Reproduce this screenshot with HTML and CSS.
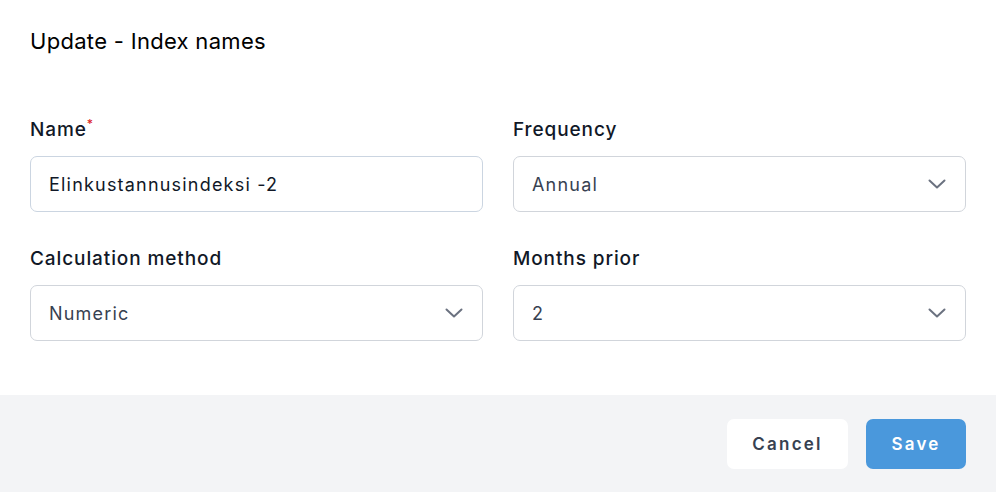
FILE: index.html
```html
<!DOCTYPE html>
<html>
<head>
<meta charset="utf-8">
<link rel="stylesheet" href="styles.css">
</head>
<body>
<div class="modal">
  <div class="content">
    <h1 class="title">Update - Index names</h1>
    <div class="grid">
      <div class="field">
        <label class="label">Name<span class="req">*</span></label>
        <div class="control input-control">Elinkustannusindeksi -2</div>
      </div>
      <div class="field">
        <label class="label">Frequency</label>
        <div class="control select-control"><span>Annual</span>
          <svg class="chev" width="18" height="10" viewBox="0 0 18 10"><path d="M1.5 1.5L9 8.5L16.5 1.5" fill="none" stroke="#6b7280" stroke-width="2" stroke-linecap="round" stroke-linejoin="round"/></svg>
        </div>
      </div>
      <div class="field">
        <label class="label">Calculation method</label>
        <div class="control select-control"><span>Numeric</span>
          <svg class="chev" width="18" height="10" viewBox="0 0 18 10"><path d="M1.5 1.5L9 8.5L16.5 1.5" fill="none" stroke="#6b7280" stroke-width="2" stroke-linecap="round" stroke-linejoin="round"/></svg>
        </div>
      </div>
      <div class="field">
        <label class="label">Months prior</label>
        <div class="control select-control"><span>2</span>
          <svg class="chev" width="18" height="10" viewBox="0 0 18 10"><path d="M1.5 1.5L9 8.5L16.5 1.5" fill="none" stroke="#6b7280" stroke-width="2" stroke-linecap="round" stroke-linejoin="round"/></svg>
        </div>
      </div>
    </div>
  </div>
  <div class="footer">
    <button class="btn btn-cancel">Cancel</button>
    <button class="btn btn-save">Save</button>
  </div>
</div>
</body>
</html>
```
FILE: styles.css
```css
* { box-sizing: border-box; }
html, body { margin: 0; padding: 0; background: #fff; }
body { font-family: Inter, "Noto Sans", sans-serif; color: #111827; }
.modal { width: 996px; height: 492px; display: flex; flex-direction: column; }
.content { padding: 27px 30px 0 30px; height: 395px; }
.title { margin: 0; font-size: 22px; line-height: 28px; font-weight: 400; letter-spacing: 0.3px; color: #000; }
.grid { display: grid; grid-template-columns: 1fr 1fr; column-gap: 30px; row-gap: 33px; margin-top: 61px; }
.field { display: flex; flex-direction: column; gap: 12px; }
.label { font-size: 19px; line-height: 28px; font-weight: 500; letter-spacing: 0.9px; color: #111827; }
.req { color: #dc2626; font-size: 12px; vertical-align: top; position: relative; top: -6px; margin-left: 0; letter-spacing: 0; }
.control { height: 56px; border-radius: 7px; border: 1px solid #d1d5db; display: flex; align-items: center; padding: 0 18px; font-size: 18px; letter-spacing: 1.2px; color: #374151; background: #fff; }
.input-control { border-color: #cbd5e1; color: #111827; }
.select-control { justify-content: space-between; padding-right: 19px; }
.chev { display: block; }
.footer { flex: 1; background: #f3f4f6; display: flex; justify-content: flex-end; align-items: center; gap: 18px; padding: 0 30px; }
.btn { height: 50px; border: none; border-radius: 7px; font-family: Inter, "Noto Sans", sans-serif; font-size: 17px; font-weight: 600; letter-spacing: 2.2px; }
.btn-cancel { width: 121px; background: #fff; color: #374151; }
.btn-save { width: 100px; background: #4a98dc; color: #fff; }
```
